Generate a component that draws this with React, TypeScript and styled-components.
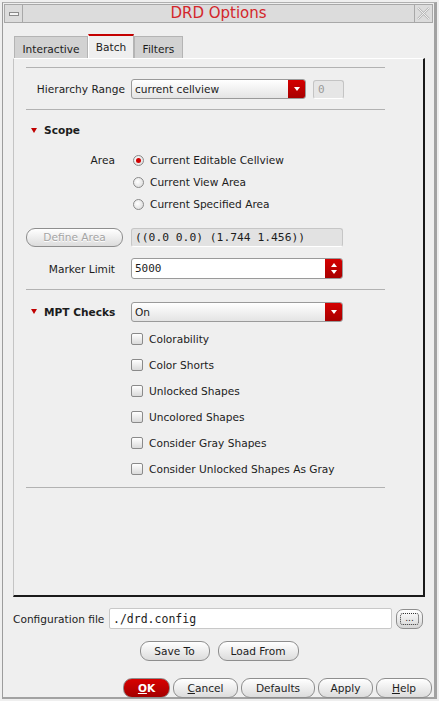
import React from 'react';
import styled, { createGlobalStyle } from 'styled-components';

const Global = createGlobalStyle`
  html, body { margin: 0; padding: 0; background: #efefef; }
  body { font-family: "DejaVu Sans", "Liberation Sans", sans-serif; font-size: 10.6px; color: #1c1c1c; }
`;

const Frame = styled.div`
  width: 439px;
  height: 701px;
  box-sizing: border-box;
  padding: 2px;
  background: #efefef;
`;

const Window = styled.div`
  height: 100%;
  box-sizing: border-box;
  border-left: 1px solid #9c9c9c;
  border-top: 1px solid #b0b0b0;
  border-right: 3px solid #a2a2a2;
  border-bottom: 2px solid #a2a2a2;
  display: flex;
  flex-direction: column;
`;

const TitleBar = styled.div`
  margin: 1px 1px 0 1px;
  height: 19px;
  box-sizing: border-box;
  border: 1px solid #a8a8a8;
  background: #dcdcdc;
  display: flex;
  align-items: stretch;
`;

const TitleBox = styled.div`
  width: 18px;
  box-sizing: border-box;
  border-right: ${p => (p.$side === 'left' ? '1px solid #a8a8a8' : 'none')};
  border-left: ${p => (p.$side === 'right' ? '1px solid #a8a8a8' : 'none')};
  display: flex;
  align-items: center;
  justify-content: center;
`;

const Title = styled.div`
  flex: 1;
  text-align: center;
  color: #d3262b;
  font-size: 15px;
  line-height: 17px;
`;

const Body = styled.div`
  flex: 1;
  padding: 11px 9px 0 10px;
  display: flex;
  flex-direction: column;
`;

const TabRow = styled.div`
  display: flex;
  align-items: flex-end;
  padding-left: 1px;
  height: 24px;
`;

const Tab = styled.div`
  box-sizing: border-box;
  width: ${p => p.$w}px;
  height: ${p => (p.$active ? '24px' : '22px')};
  display: flex;
  align-items: center;
  justify-content: center;
  background: ${p => (p.$active ? '#efefef' : '#d2d2d2')};
  border: 1px solid #b4b4b4;
  border-bottom: none;
  border-top: ${p => (p.$active ? '2px solid #c40000' : '1px solid #b4b4b4')};
  border-left: ${p => (p.$active ? '1px solid #fff' : '1px solid #b4b4b4')};
  padding-top: ${p => (p.$active ? '0' : '2px')};
`;

const Panel = styled.div`
  height: 539px;
  box-sizing: border-box;
  border-top: 1px solid #fff;
  border-left: 1px solid #c4c4c4;
  border-right: 2px solid #1a1a1a;
  border-bottom: 2px solid #1a1a1a;
  padding: 8px 38px 0 12px;
  display: flex;
  flex-direction: column;
`;

const Sep = styled.div`
  height: 1px;
  background: #b2b2b2;
  margin-top: ${p => p.$mt || 0}px;
`;

const Row = styled.div`
  display: flex;
  align-items: center;
  height: ${p => p.$h}px;
  margin-top: ${p => p.$mt || 0}px;
`;

const Label = styled.div`
  width: 105px;
  box-sizing: border-box;
  text-align: right;
  padding-right: ${p => p.$pr}px;
  white-space: nowrap;
`;

const Combo = styled.div`
  width: ${p => p.$w}px;
  height: 20px;
  box-sizing: border-box;
  border: 1px solid #9a9a9a;
  border-radius: 3px;
  background: linear-gradient(#ffffff, #e4e4e4);
  display: flex;
  align-items: center;
  overflow: hidden;
`;

const ComboText = styled.div`
  flex: 1;
  padding-left: 3px;
`;

const RedButton = styled.div`
  width: 17px;
  align-self: stretch;
  background: linear-gradient(#d40000, #a80000);
  display: flex;
  flex-direction: column;
  align-items: center;
  justify-content: center;
  gap: 3px;
`;

const DisabledField = styled.div`
  margin-left: 7px;
  width: 31px;
  height: 19px;
  box-sizing: border-box;
  border: 1px solid #c4c4c4;
  border-bottom-color: #fff;
  border-radius: 3px;
  background: #e6e6e6;
  color: #9a9a9a;
  font-family: "DejaVu Sans Mono", monospace;
  font-size: 11px;
  padding-left: 4px;
  display: flex;
  align-items: center;
`;

const Section = styled.div`
  display: flex;
  align-items: center;
  gap: 7px;
  padding-left: 5px;
  height: 20px;
  margin-top: ${p => p.$mt || 0}px;
  font-weight: bold;
`;

const SectionCell = styled(Section)`
  width: 105px;
  box-sizing: border-box;
`;

const Tri = styled.div`
  width: 0;
  height: 0;
  border-left: 3px solid transparent;
  border-right: 3px solid transparent;
  border-top: 5px solid #c00000;
`;

const UpTri = styled.div`
  width: 0;
  height: 0;
  border-left: 3px solid transparent;
  border-right: 3px solid transparent;
  border-bottom: 4px solid #fff;
`;

const DownTri = styled.div`
  width: 0;
  height: 0;
  border-left: 3px solid transparent;
  border-right: 3px solid transparent;
  border-top: 4px solid #fff;
`;

const OptionRow = styled.div`
  display: flex;
  align-items: center;
  height: ${p => p.$h}px;
  margin-top: ${p => p.$mt || 0}px;
  padding-left: ${p => p.$pl}px;
  gap: 6px;
`;

const Radio = styled.div`
  width: 11px;
  height: 11px;
  box-sizing: border-box;
  border-radius: 50%;
  border: 1px solid #8a8a8a;
  background: radial-gradient(circle at 40% 40%, #ffffff, #d6d6d6);
  display: flex;
  align-items: center;
  justify-content: center;
  margin-left: 2px;
`;

const RadioDot = styled.div`
  width: 5px;
  height: 5px;
  border-radius: 50%;
  background: #d00000;
`;

const Check = styled.div`
  width: 12px;
  height: 12px;
  box-sizing: border-box;
  border: 1px solid #8a8a8a;
  border-radius: 2px;
  background: linear-gradient(#ffffff, #dadada);
`;

const Pill = styled.div`
  width: ${p => p.$w}px;
  height: ${p => p.$h || 20}px;
  box-sizing: border-box;
  border: 1px solid #8e8e8e;
  border-radius: 9px;
  background: ${p => (p.$red ? 'linear-gradient(#d80000, #a40000)' : 'linear-gradient(#ffffff, #dcdcdc)')};
  color: ${p => (p.$red ? '#fff' : p.$disabled ? '#a4a4a4' : '#1c1c1c')};
  font-weight: ${p => (p.$red ? 'bold' : 'normal')};
  text-shadow: ${p => (p.$disabled ? '0 1px 0 #fff' : 'none')};
  display: flex;
  align-items: center;
  justify-content: center;
  flex-shrink: 0;
`;

const CoordField = styled.div`
  margin-left: 8px;
  width: 212px;
  height: 19px;
  box-sizing: border-box;
  border: 1px solid #c6c6c6;
  border-bottom-color: #fff;
  border-radius: 3px;
  background: #e2e2e2;
  font-family: "DejaVu Sans Mono", monospace;
  font-size: 11.3px;
  padding-left: 3px;
  display: flex;
  align-items: center;
  white-space: nowrap;
`;

const SpinField = styled.div`
  width: 212px;
  height: 21px;
  box-sizing: border-box;
  border: 1px solid #9a9a9a;
  border-radius: 3px;
  background: #fff;
  display: flex;
  align-items: center;
  overflow: hidden;
  font-family: "DejaVu Sans Mono", monospace;
  font-size: 11px;
`;

const SpinText = styled.div`
  flex: 1;
  padding-left: 3px;
`;

const ConfigRow = styled.div`
  display: flex;
  align-items: center;
  margin-top: 11px;
  height: 21px;
`;

const ConfigLabel = styled.div`
  width: 96px;
  white-space: nowrap;
`;

const ConfigInput = styled.div`
  width: 283px;
  height: 21px;
  box-sizing: border-box;
  border: 1px solid #c8c8c8;
  border-radius: 2px;
  background: #fff;
  font-family: "DejaVu Sans Mono", monospace;
  font-size: 11.5px;
  padding-left: 3px;
  display: flex;
  align-items: center;
`;

const DotsButton = styled.div`
  margin-left: 4px;
  width: 27px;
  height: 20px;
  box-sizing: border-box;
  border: 1px solid #8e8e8e;
  border-radius: 7px;
  background: linear-gradient(#ffffff, #d6d6d6);
  display: flex;
  align-items: center;
  justify-content: center;
`;

const DotsInner = styled.div`
  width: 19px;
  height: 12px;
  box-sizing: border-box;
  border: 1px dotted #333;
  border-radius: 3px;
  font-size: 9px;
  line-height: 8px;
  text-align: center;
`;

const CenterRow = styled.div`
  display: flex;
  justify-content: center;
  gap: 8px;
  margin-top: 12px;
`;

const ButtonBar = styled.div`
  display: flex;
  justify-content: flex-end;
  gap: 3px;
  margin-top: 17px;
  margin-right: -7px;
`;

const U = styled.span`
  text-decoration: underline;
`;

const ComboArrow = () => (
  <RedButton>
    <DownTri />
  </RedButton>
);

const checks = [
  'Colorability',
  'Color Shorts',
  'Unlocked Shapes',
  'Uncolored Shapes',
  'Consider Gray Shapes',
  'Consider Unlocked Shapes As Gray',
];

export default function App() {
  return (
    <>
      <Global />
      <Frame>
        <Window>
          <TitleBar>
            <TitleBox $side="left">
              <svg width="10" height="4" viewBox="0 0 10 4">
                <rect x="0.5" y="0.5" width="9" height="3" fill="#f4f4f4" stroke="#8a8a8a" />
              </svg>
            </TitleBox>
            <Title>DRD Options</Title>
            <TitleBox $side="right">
              <svg width="13" height="13" viewBox="0 0 13 13">
                <path d="M1 1 L12 12 M12 1 L1 12" stroke="#b8b8b8" strokeWidth="2.4" />
                <path d="M1 1 L12 12 M12 1 L1 12" stroke="#f4f4f4" strokeWidth="0.9" />
              </svg>
            </TitleBox>
          </TitleBar>
          <Body>
            <TabRow>
              <Tab $w={74}>Interactive</Tab>
              <Tab $w={46} $active>Batch</Tab>
              <Tab $w={49}>Filters</Tab>
            </TabRow>
            <Panel>
              <Sep />
              <Row $h={20} $mt={11}>
                <Label $pr={6}>Hierarchy Range</Label>
                <Combo $w={175}>
                  <ComboText>current cellview</ComboText>
                  <ComboArrow />
                </Combo>
                <DisabledField>0</DisabledField>
              </Row>
              <Sep $mt={10} />
              <Section $mt={10}>
                <Tri />
                Scope
              </Section>
              <Row $h={22} $mt={9}>
                <Label $pr={16}>Area</Label>
                <OptionRow $h={22} $pl={0}>
                  <Radio>
                    <RadioDot />
                  </Radio>
                  Current Editable Cellview
                </OptionRow>
              </Row>
              <OptionRow $h={22} $pl={105}>
                <Radio />
                Current View Area
              </OptionRow>
              <OptionRow $h={22} $pl={105}>
                <Radio />
                Current Specified Area
              </OptionRow>
              <Row $h={20} $mt={12}>
                <Pill $w={97} $h={19} $disabled>
                  Define Area
                </Pill>
                <CoordField>((0.0 0.0) (1.744 1.456))</CoordField>
              </Row>
              <Row $h={21} $mt={11}>
                <Label $pr={16}>Marker Limit</Label>
                <SpinField>
                  <SpinText>5000</SpinText>
                  <RedButton>
                    <UpTri />
                    <DownTri />
                  </RedButton>
                </SpinField>
              </Row>
              <Sep $mt={10} />
              <Row $h={21} $mt={11}>
                <SectionCell>
                  <Tri />
                  MPT Checks
                </SectionCell>
                <Combo $w={212}>
                  <ComboText>On</ComboText>
                  <ComboArrow />
                </Combo>
              </Row>
              {checks.map((c, i) => (
                <OptionRow key={c} $h={26} $mt={i === 0 ? 4 : 0} $pl={105}>
                  <Check />
                  {c}
                </OptionRow>
              ))}
              <Sep $mt={5} />
            </Panel>
            <ConfigRow>
              <ConfigLabel>Configuration file</ConfigLabel>
              <ConfigInput>./drd.config</ConfigInput>
              <DotsButton>
                <DotsInner>...</DotsInner>
              </DotsButton>
            </ConfigRow>
            <CenterRow>
              <Pill $w={70}>Save To</Pill>
              <Pill $w={81}>Load From</Pill>
            </CenterRow>
            <ButtonBar>
              <Pill $w={47} $red>
                <U>O</U>K
              </Pill>
              <Pill $w={65}>
                <U>C</U>ancel
              </Pill>
              <Pill $w={74}>Defaults</Pill>
              <Pill $w={55}>Apply</Pill>
              <Pill $w={56}>
                <U>H</U>elp
              </Pill>
            </ButtonBar>
          </Body>
        </Window>
      </Frame>
    </>
  );
}
